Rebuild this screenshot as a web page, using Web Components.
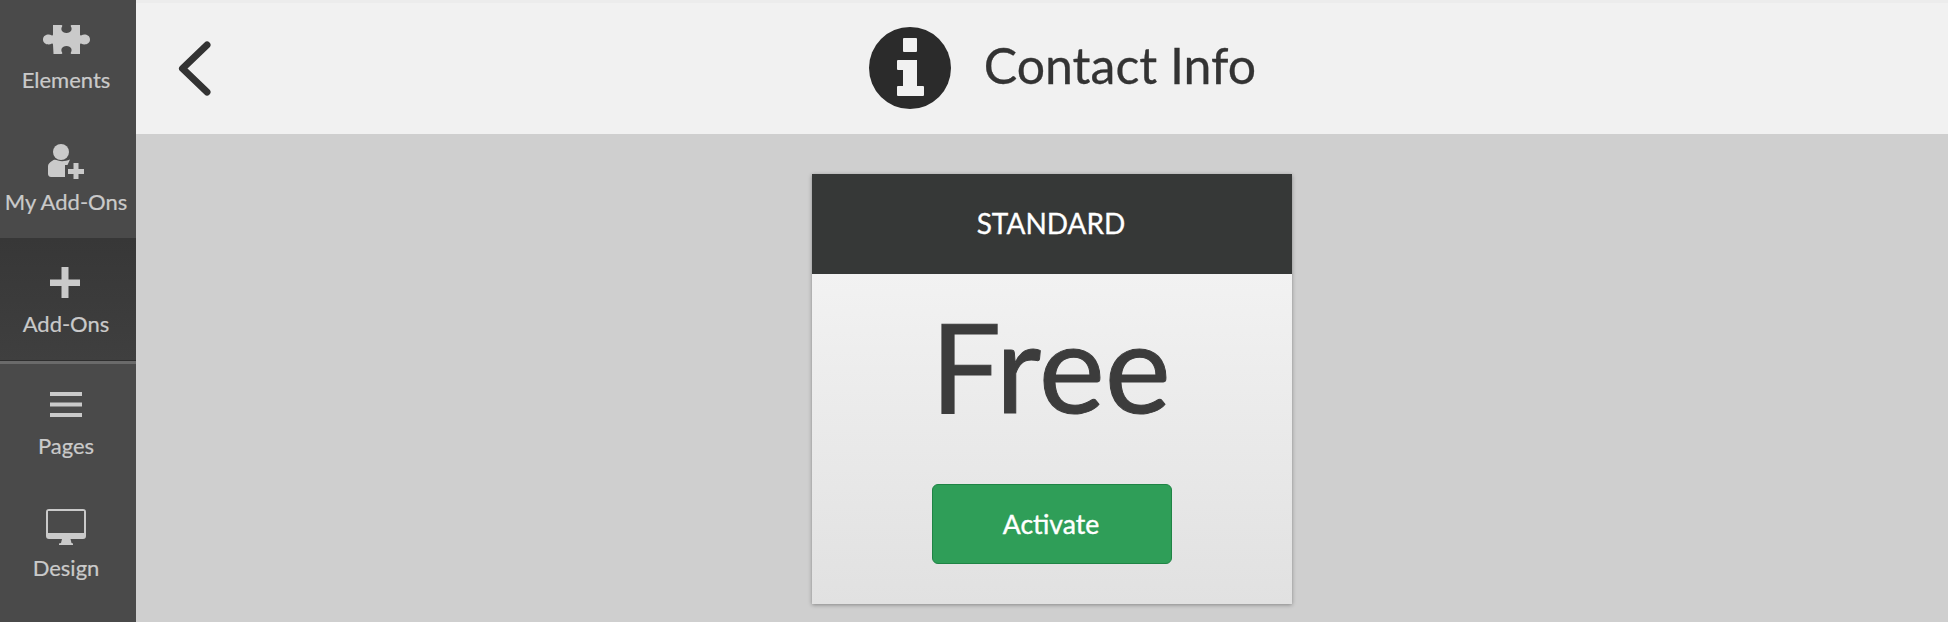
<!DOCTYPE html>
<html><head><meta charset="utf-8">
<style>
html,body{margin:0;padding:0;height:622px;overflow:hidden;font-family:Lato,"Liberation Sans",sans-serif;background:#cfcfcf}
app-shell{display:flex;width:1948px;height:622px}
</style></head>
<body>
<template id="t-shell">
<style>
:host{display:flex;overflow:hidden}
.main{flex:1;display:flex;flex-direction:column;min-width:0}
.content{flex:1;display:flex;justify-content:center;padding:40px 0 0 20px;background:#cfcfcf}
</style>
<side-bar>
<nav-item label="Elements" h="116" pt="19"><svg viewBox="0 0 47 29" width="47" height="29" fill="#cacaca"><path d="M10 0H18.500c.8 0 1 .8.6 1.500-1.600 2.500-.5 6.500 4.400 6.500s6-4 4.400-6.500C27.500.8 27.700 0 28.500 0H37V9.500c0 1 .8 1.200 1.500.8 2.500-1.600 8.500-.8 8.500 4.200s-6 5.800-8.500 4.200c-.7-.4-1.500-.2-1.500.8V29H28.500c-.8 0-1-.8-.6-1.500 1.600-2.500.5-6.500-4.400-6.500s-6 4-4.400 6.500c.4.7.2 1.500-.6 1.500H10.500L10 19.500c0-1-.8-1.200-1.500-.8C6 20.300 0 19.500 0 14.500S6 8.700 8.500 10.300c.7.4 1.500.2 1.500-.8z"/></svg></nav-item>
<nav-item label="My Add-Ons"><svg viewBox="0 0 36 35" width="36" height="35" fill="#cacaca"><circle cx="13" cy="8" r="8"/><path d="M4 17C6 15 8 15.500 10 16.500 14 18 18 17 22 15.500L19.500 21H17V33H3C1 33 0 31.500 0 30V22C0 20 2 18 4 17z"/><path d="M25.500 19h5v6h5.500v5h-5.500v5h-5v-5H20v-5h5.500z"/></svg></nav-item>
<nav-item label="Add-Ons" active><svg viewBox="0 0 32 33" width="32" height="33" fill="#cacaca"><path d="M11.500 0h7v12.500H30v6.500H18.500V31h-7V19H0v-6.500h11.500z"/></svg></nav-item>
<nav-item label="Pages"><svg viewBox="0 0 32 27" width="32" height="27" fill="#cacaca"><rect width="32" height="4"/><rect y="10.500" width="32" height="4"/><rect y="21" width="32" height="4"/></svg></nav-item>
<nav-item label="Design"><svg viewBox="0 0 40 36" width="40" height="36" fill="#cacaca"><path fill-rule="evenodd" d="M3 0h34a3 3 0 0 1 3 3v24a3 3 0 0 1-3 3H3a3 3 0 0 1-3-3V3a3 3 0 0 1 3-3zm-1 2v22h36V2z"/><path d="M16 30h8.500l1 4 1.500.5V36H13v-1.500l2-.5z"/></svg></nav-item>
</side-bar>
<div class="main">
<top-bar heading="Contact Info"></top-bar>
<div class="content">
<plan-card plan="STANDARD" price="Free" action="Activate"></plan-card>
</div>
</div>
</template>

<template id="t-side">
<style>:host{display:flex;flex-direction:column;box-sizing:border-box;width:136px;padding-right:4px;flex:none;background:#4a4a4a;height:622px;overflow:hidden;position:relative}</style>
<slot></slot>
</template>

<template id="t-nav">
<style>
:host{display:flex;flex-direction:column;align-items:center;box-sizing:border-box;height:var(--h,122px);flex:none;color:#cacaca;font-size:22px;line-height:24px;padding-top:var(--pt,25px);-webkit-text-stroke:.2px #cacaca}
:host([active]){background:linear-gradient(#373737,#3f3f3f);height:126px;margin:0 -4px -4px 0;padding-right:4px;border-bottom:3px solid #6a6a6a;box-shadow:inset 0 -1px 0 #2e2e2e}
.i{height:40px;display:flex;align-items:center;justify-content:center}
.l{margin-top:9px;white-space:nowrap}
::slotted(svg){display:block}
</style>
<div class="i"><slot></slot></div><div class="l"></div>
</template>

<template id="t-top">
<style>
:host{display:flex;align-items:center;justify-content:center;position:relative;height:134px;flex:none;box-sizing:border-box;background:#f1f1f1;border-top:3px solid #ececec;color:#333;font-size:50px;padding:0 0 2px 41px}
.back{position:absolute;left:40px;top:37px}
.ic{margin-right:33px;display:block;flex:none}
.t{line-height:60px;position:relative;top:-3px;-webkit-text-stroke:.3px #333}
</style>
<svg class="back" width="36" height="58" viewBox="0 0 36 58"><path d="M31 5 L6.500 28.500 L31 52" fill="none" stroke="#333" stroke-width="7" stroke-linejoin="round" stroke-linecap="round"/></svg>
<svg class="ic" width="82" height="82" viewBox="0 0 82 82"><circle cx="41" cy="41" r="41" fill="#2b2b2b"/><path fill="#f1f1f1" d="M35 11h12a1 1 0 0 1 1 1v12a1 1 0 0 1-1 1H35a1 1 0 0 1-1-1V12a1 1 0 0 1 1-1zM29 33h19v26h6a1 1 0 0 1 1 1v8a1 1 0 0 1-1 1H29a1 1 0 0 1-1-1v-8a1 1 0 0 1 1-1h5V43h-5a1 1 0 0 1-1-1v-8a1 1 0 0 1 1-1z"/></svg>
<span class="t"></span>
</template>

<template id="t-card">
<style>
:host{width:480px;height:430px;box-shadow:0 1px 4px rgba(0,0,0,.35);background:linear-gradient(#f7f7f7,#e1e1e1);flex:none;display:flex;flex-direction:column;align-items:center}
.h{align-self:stretch;box-sizing:border-box;height:100px;background:#363837;color:#fff;font-size:28px;display:flex;align-items:center;justify-content:center;flex:none;padding:0 2px 2px 0;-webkit-text-stroke:.3px #fff}
.p{font-size:125px;line-height:144px;color:#3c3c3c;margin:19px 3px 0 0;height:144px;-webkit-text-stroke:1px #3c3c3c}
.b{margin-top:47px;width:240px;height:80px;box-sizing:border-box;border:1px solid #1f8445;border-radius:6px;background:#2f9e58;color:#fff;font-size:26.500px;display:flex;align-items:center;justify-content:center;padding-right:2px;-webkit-text-stroke:.4px #fff}
</style>
<div class="h"></div><div class="p"></div><div class="b"></div>
</template>

<script>
function mount(el,id){const r=el.attachShadow({mode:'open'});r.appendChild(document.getElementById(id).content.cloneNode(true));return r}
customElements.define('app-shell',class extends HTMLElement{constructor(){super();mount(this,'t-shell')}});
customElements.define('side-bar',class extends HTMLElement{constructor(){super();mount(this,'t-side')}});
customElements.define('nav-item',class extends HTMLElement{connectedCallback(){if(this.shadowRoot)return;const r=mount(this,'t-nav');r.querySelector('.l').textContent=this.getAttribute('label');if(this.hasAttribute('h'))this.style.setProperty('--h',this.getAttribute('h')+'px');if(this.hasAttribute('pt'))this.style.setProperty('--pt',this.getAttribute('pt')+'px')}});
customElements.define('top-bar',class extends HTMLElement{connectedCallback(){if(this.shadowRoot)return;const r=mount(this,'t-top');r.querySelector('.t').textContent=this.getAttribute('heading')}});
customElements.define('plan-card',class extends HTMLElement{connectedCallback(){if(this.shadowRoot)return;const r=mount(this,'t-card');r.querySelector('.h').textContent=this.getAttribute('plan');r.querySelector('.p').textContent=this.getAttribute('price');r.querySelector('.b').textContent=this.getAttribute('action')}});
</script>
<app-shell></app-shell>
</body></html>
